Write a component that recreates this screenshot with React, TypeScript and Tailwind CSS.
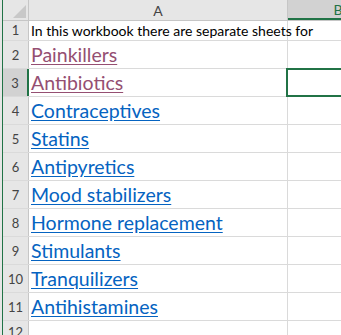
import React from "react";

const links = [
    { label: "Painkillers", visited: true },
    { label: "Antibiotics", visited: true },
    { label: "Contraceptives", visited: false },
    { label: "Statins", visited: false },
    { label: "Antipyretics", visited: false },
    { label: "Mood stabilizers", visited: false },
    { label: "Hormone replacement", visited: false },
    { label: "Stimulants", visited: false },
    { label: "Tranquilizers", visited: false },
    { label: "Antihistamines", visited: false },
];

const font = { fontFamily: "Lato, 'Open Sans', sans-serif" };

const App = () => {
    return (
        <div className="w-[341px] h-[335px] overflow-hidden bg-white flex" style={font}>
            {/* left edge */}
            <div className="w-[2px] bg-[#e6e6e6] shrink-0" />
            <div className="w-[1px] bg-[#217346] shrink-0" />

            <div className="flex flex-col shrink-0">
                {/* column headers */}
                <div className="flex h-[21px] shrink-0 border-b border-[#c6c6c6]">
                    <div className="w-[26px] bg-[#e6e6e6] border-r border-[#c6c6c6] relative shrink-0">
                        <svg className="absolute right-[2px] bottom-[2px]" width="13" height="13" viewBox="0 0 13 13">
                            <polygon points="13,0 13,13 0,13" fill="#c8c8c8" />
                        </svg>
                    </div>
                    <div className="w-[259px] bg-[#e6e6e6] border-r border-[#c6c6c6] flex items-center justify-center text-[14px] text-[#444] shrink-0">
                        A
                    </div>
                    <div className="w-[100px] bg-[#d2d2d2] border-b-2 border-[#217346] flex items-center justify-center text-[14px] text-[#217346] shrink-0">
                        B
                    </div>
                </div>

                {/* row 1 */}
                <div className="flex h-[20px] shrink-0 border-b border-[#dadada]">
                    <div className="w-[26px] bg-[#e6e6e6] border-r border-[#c6c6c6] flex items-center justify-center text-[13px] text-[#444] shrink-0">
                        1
                    </div>
                    <div className="w-[259px] border-r border-[#dadada] flex items-center pl-[2px] text-[14px] text-black whitespace-nowrap shrink-0">
                        In this workbook there are separate sheets for
                    </div>
                    <div className="w-[100px] shrink-0" />
                </div>

                {links.map((link, i) => (
                    <div key={link.label} className="flex h-[28px] shrink-0 border-b border-[#dadada]">
                        <div
                            className={
                                i === 1
                                    ? "w-[26px] bg-[#d2d2d2] border-r-2 border-[#217346] flex items-end justify-center pb-[3px] text-[13px] text-[#444] shrink-0"
                                    : "w-[26px] bg-[#e6e6e6] border-r border-[#c6c6c6] flex items-end justify-center pb-[3px] text-[13px] text-[#444] shrink-0"
                            }
                        >
                            {i + 2}
                        </div>
                        <div className="w-[259px] border-r border-[#dadada] flex items-end pl-[2px] pb-[1px] shrink-0">
                            <span
                                className={
                                    link.visited
                                        ? "text-[19.5px] leading-[24px] text-[#954f72] underline underline-offset-[2px]"
                                        : "text-[19.5px] leading-[24px] text-[#0563c1] underline underline-offset-[2px]"
                                }
                            >
                                {link.label}
                            </span>
                        </div>
                        <div className="w-[100px] relative shrink-0">
                            {i === 1 && (
                                <div className="absolute left-[-2px] top-[-1px] right-0 bottom-[-1px] border-2 border-[#217346]" />
                            )}
                        </div>
                    </div>
                ))}

                {/* row 12 */}
                <div className="flex h-[20px] shrink-0">
                    <div className="w-[26px] bg-[#e6e6e6] border-r border-[#c6c6c6] flex items-start justify-center pt-[2px] text-[13px] text-[#444] shrink-0">
                        12
                    </div>
                    <div className="w-[259px] border-r border-[#dadada] shrink-0" />
                    <div className="w-[100px] shrink-0" />
                </div>
            </div>
        </div>
    );
};

export default App;
